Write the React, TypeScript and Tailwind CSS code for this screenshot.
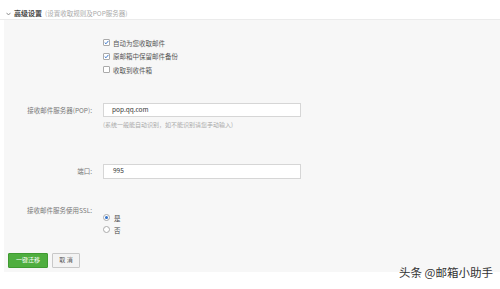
export default function App() {
  return (
    <div className="relative w-[500px] h-[289px] overflow-hidden bg-white font-['Noto_Sans_CJK_SC','Noto_Sans',sans-serif]">
      {/* header */}
      <div className="h-[20px] border-b border-[#ebebeb] pl-[6px] pt-[8px] flex items-start gap-[2px] leading-[10px]">
        <svg width="5" height="4" viewBox="0 0 5 4" className="mt-[4px]">
          <path d="M0.5 0.8 L2.5 3 L4.5 0.8" fill="none" stroke="#777" strokeWidth="0.8" />
        </svg>
        <span className="text-[7px] font-bold text-[#444] ml-[1px]">高级设置</span>
        <span className="text-[6.5px] text-[#aaa] ml-[1px]">(设置收取规则及POP服务器)</span>
      </div>

      {/* panel */}
      <div className="ml-[4px] h-[252px] bg-[#f7f7f7] pt-[16px] pl-[4px]">
        <div className="pl-[95px] flex flex-col text-[6.5px] text-[#555]">
          <CheckRow checked label="自动为您收取邮件" />
          <CheckRow checked label="原邮箱中保留邮件备份" />
          <CheckRow label="收取到收件箱" />
        </div>

        <div className="mt-[26px] flex items-center">
          <div className="w-[84px] text-right text-[6.5px] text-[#777] leading-[10px]">接收邮件服务器(POP):</div>
          <div className="ml-[11px] w-[198px] h-[14px] bg-white border border-[#d6d6d6] flex items-center pl-[8px] text-[6.5px] text-[#333]">
            pop.qq.com
          </div>
        </div>
        <div className="mt-[3px] pl-[95px] text-[6px] text-[#aaa] leading-[10px]">
          (系统一般能自动识别，如不能识别请您手动输入)
        </div>

        <div className="mt-[34px] flex items-center">
          <div className="w-[84px] text-right text-[6.5px] text-[#777] leading-[10px]">端口:</div>
          <div className="ml-[11px] w-[198px] h-[15px] bg-white border border-[#d6d6d6] flex items-center pl-[9px] text-[6.5px] text-[#333]">
            995
          </div>
        </div>

        <div className="mt-[26px] flex items-start">
          <div className="w-[84px] text-right text-[6.5px] text-[#777] leading-[10px]">接收邮件服务使用SSL:</div>
          <div className="ml-[11px] pt-[7px] flex flex-col text-[6.5px] text-[#444]">
            <RadioRow checked label="是" />
            <RadioRow label="否" />
          </div>
        </div>

        <div className="mt-[17px] flex gap-[4px]">
          <button className="w-[40px] h-[15px] rounded-[1px] bg-[#4fae3f] border border-[#3f9a31] text-white text-[6px] leading-none">
            一键迁移
          </button>
          <button className="w-[28px] h-[15px] rounded-[1px] bg-[#f3f3f3] border border-[#c8c8c8] text-[#555] text-[6px] leading-none">
            取 消
          </button>
        </div>
      </div>

      {/* watermark */}
      <div className="absolute right-[7px] bottom-[10px] text-[11.5px] leading-[14px] text-[#333]">
        头条 @邮箱小助手
      </div>
    </div>
  );
}

function CheckRow({ checked, label }: { checked?: boolean; label: string }) {
  return (
    <div className="h-[13.5px] flex items-center gap-[3px]">
      <div className="w-[7px] h-[7px] bg-white border border-[#aaa] rounded-[1px] flex items-center justify-center">
        {checked && (
          <svg width="7" height="7" viewBox="0 0 7 7">
            <path d="M1 3.6 L2.8 5.3 L6.2 1.2" fill="none" stroke="#2f6fc9" strokeWidth="1.3" />
          </svg>
        )}
      </div>
      <span className="leading-[10px]">{label}</span>
    </div>
  );
}

function RadioRow({ checked, label }: { checked?: boolean; label: string }) {
  return (
    <div className="h-[12px] flex items-center gap-[4px]">
      <div className="w-[7px] h-[7px] bg-white border border-[#aaa] rounded-full flex items-center justify-center">
        {checked && <div className="w-[3px] h-[3px] rounded-full bg-[#2f6fc9]" />}
      </div>
      <span className="leading-[10px]">{label}</span>
    </div>
  );
}
